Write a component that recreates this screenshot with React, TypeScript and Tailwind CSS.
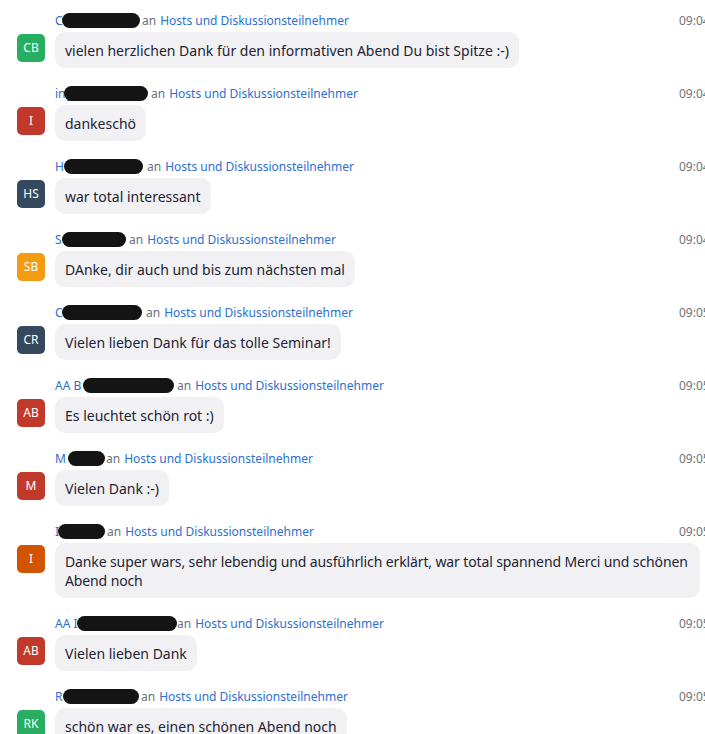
import React from "react";

type Msg = {
  initials: string;
  color: string;
  prefix: string;
  nameW: number;
  blobL: number;
  blobW: number;
  time: string;
  text: string;
  tight?: boolean;
};

const msgs: Msg[] = [
  { initials: "CB", color: "bg-[#27ae60]", prefix: "C", nameW: 87, blobL: 7, blobW: 78, time: "09:04", text: "vielen herzlichen Dank für den informativen Abend Du bist Spitze :-)" },
  { initials: "I", color: "bg-[#c0392b]", prefix: "ing", nameW: 96, blobL: 9, blobW: 84, time: "09:04", text: "dankeschö" },
  { initials: "HS", color: "bg-[#34495e]", prefix: "H", nameW: 92, blobL: 9, blobW: 79, time: "09:04", text: "war total interessant" },
  { initials: "SB", color: "bg-[#f39c12]", prefix: "S", nameW: 74, blobL: 7, blobW: 64, time: "09:04", text: "DAnke, dir auch und bis zum nächsten mal" },
  { initials: "CR", color: "bg-[#34495e]", prefix: "C", nameW: 91, blobL: 7, blobW: 80, time: "09:05", text: "Vielen lieben Dank für das tolle Seminar!" },
  { initials: "AB", color: "bg-[#c0392b]", prefix: "AA B", nameW: 122, blobL: 28, blobW: 91, time: "09:05", text: "Es leuchtet schön rot :)" },
  { initials: "M", color: "bg-[#c0392b]", prefix: "M", nameW: 51, blobL: 13, blobW: 37, time: "09:05", text: "Vielen Dank :-)" },
  { initials: "I", color: "bg-[#d35400]", prefix: "I", nameW: 52, blobL: 3, blobW: 47, time: "09:05", text: "Danke super wars, sehr lebendig und ausführlich erklärt, war total spannend Merci und schönen Abend noch", tight: true },
  { initials: "AB", color: "bg-[#c0392b]", prefix: "AA I", nameW: 122, blobL: 22, blobW: 100, time: "09:05", text: "Vielen lieben Dank" },
  { initials: "RK", color: "bg-[#27ae60]", prefix: "R", nameW: 86, blobL: 8, blobW: 76, time: "09:05", text: "schön war es, einen schönen Abend noch" },
];

function Row({ m }: { m: Msg }) {
  return (
    <div className="flex flex-col">
      <div className="flex items-center h-4 pl-[55px] text-[12px] leading-4 text-[#2b6fd0]">
        <span className="relative inline-block shrink-0 overflow-visible whitespace-nowrap" style={{ width: m.nameW }}>
          {m.prefix}
          <span
            className="absolute top-[0px] h-[15px] rounded-full bg-[#141414]"
            style={{ left: m.blobL, width: m.blobW }}
          />
        </span>
        <span className="text-[#6b7079]">an</span>
        <span className="ml-[4px] whitespace-nowrap">Hosts und Diskussionsteilnehmer</span>
        <span className="ml-auto w-[41px] shrink-0 text-[12px] text-[#6f737a]">{m.time}</span>
      </div>
      <div className="mt-[3px] flex items-start">
        <div className={`ml-[17px] mt-[2px] flex h-[28px] w-[28px] shrink-0 items-center justify-center rounded-[5px] ${m.color} text-[12px] text-white`}>
          {m.initials}
        </div>
        <div
          className={`ml-[10px] max-w-[645px] rounded-[10px] bg-[#f1f1f4] px-[10px] py-[8.5px] text-[14px] leading-[19px] text-[#232333] ${m.tight ? "tracking-[-0.12px]" : ""}`}
        >
          {m.text}
        </div>
      </div>
    </div>
  );
}

export default function App() {
  return (
    <div className="h-[734px] w-[705px] overflow-hidden bg-white" style={{ fontFamily: '"Noto Sans", "Open Sans", sans-serif' }}>
      <div className="flex w-[720px] flex-col gap-[18px] pt-[13px]">
        {msgs.map((m, i) => (
          <Row key={i} m={m} />
        ))}
      </div>
    </div>
  );
}
